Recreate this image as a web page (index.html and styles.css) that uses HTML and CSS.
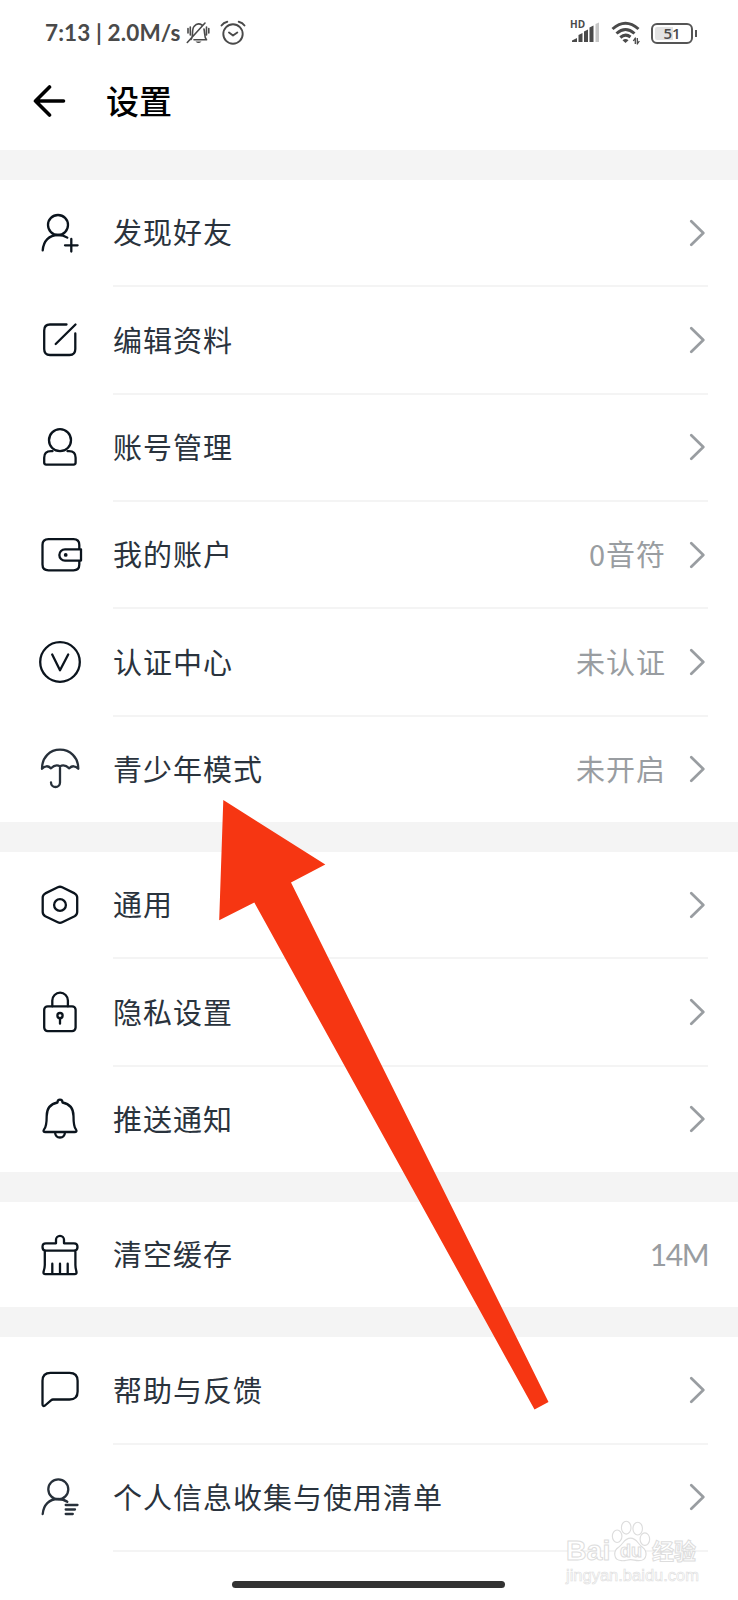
FILE: index.html
```html
<!DOCTYPE html>
<html lang="zh-CN">
<head>
  <meta charset="utf-8" />
  <title>设置</title>
  <link rel="stylesheet" href="styles.css">
</head>
<body>
<svg class="defs" width="0" height="0">
  <symbol id="arrow" viewBox="0 0 16 28"><path d="M2.300 2.300L14.300 14L2.300 25.700" /></symbol>
</svg>
<div class="page">
  <div class="status">
    <span class="time">7:13 | 2.0M/s</span>
    <svg class="mute" width="24" height="24" viewBox="0 0 24 24">
      <path d="M5 18.5C7.500 16 5.500 8 8 5.500Q11.500 1 16 4M18 8C19 12 18 16 20.500 18.800H8M1.300 21.500L19 2M2 7.500V12M4.300 6V14M20.500 6V14M22.800 7.500V12" />
      <path class="fill" d="M9.500 20.500H15.500Q12.500 23.500 9.500 20.500Z" />
    </svg>
    <svg class="alarm" width="26" height="26" viewBox="0 0 26 26">
      <circle cx="13" cy="14" r="9.700" /><path d="M9 12.500L13 15.500L17.300 12.500M1.500 5.500Q3.500 2.500 7.300 1.700M24.500 5.500Q22.500 2.500 18.700 1.700" />
    </svg>
    <div class="signal">
      <span class="hd">HD</span>
      <svg width="30" height="24" viewBox="0 0 30 24">
        <path class="fill" d="M1 21V19.500L6 17V21ZM7.500 21V14L11.500 12V21ZM13 21V10.500L17 8.500V21ZM18.500 21V6.500L22.500 4.500V21Z" />
        <path class="weak" d="M24.500 21V3L28 1.500V21Z" />
      </svg>
    </div>
    <svg class="wifi" width="30" height="24" viewBox="0 0 30 24">
      <path d="M1.500 8Q14.500 -3.500 27.500 8M5.500 12.500Q14.500 4.500 23.500 12.500M9.300 16.500Q14.500 12 19.500 16" />
      <path class="fill" d="M11.500 19.300Q14.500 16.800 17.500 19.300L14.500 22Z" />
      <path class="data" d="M24.300 23V17L22.300 20M26.300 17V23L28.300 20" />
    </svg>
    <div class="battery"><span>51</span></div>
  </div>
  <div class="header">
    <svg width="34" height="32" viewBox="0 0 34 32"><path d="M16.500 2L2.500 16L16.500 30M2.500 16H30.500" /></svg>
    <h1>设置</h1>
  </div>

  <ul class="group">
    <li>
      <svg class="icon" viewBox="0 0 48 48"><circle cx="22" cy="16" r="10" /><path d="M6.700 41.300C7.500 32 13 26 22 26Q27.500 26 31.300 28.600M35.300 30V42.600M29 36.300H41.600" /></svg>
      <div class="row"><span>发现好友</span><svg class="go"><use href="#arrow" /></svg></div>
    </li>
    <li>
      <svg class="icon" viewBox="0 0 48 48"><path d="M30.500 8.500H14Q8.200 8.500 8.200 14.500V33Q8.200 39 14 39H33.500Q39.300 39 39.300 33V17.500M19.700 28L39.500 8.500" /></svg>
      <div class="row"><span>编辑资料</span><svg class="go"><use href="#arrow" /></svg></div>
    </li>
    <li>
      <svg class="icon" viewBox="0 0 48 48"><circle cx="24" cy="17.200" r="11" /><path d="M16.500 28.200H15Q8.200 28.200 8.200 34.800V39.600Q8.200 41.600 10.200 41.600H37.600Q39.600 41.600 39.600 39.600V34.800Q39.600 28.200 33 28.200H31.500" /></svg>
      <div class="row"><span>账号管理</span><svg class="go"><use href="#arrow" /></svg></div>
    </li>
    <li>
      <svg class="icon" viewBox="0 0 48 48"><path d="M43.300 18.300V14Q43.300 8.200 37.500 8.200H12.500Q6.500 8.200 6.500 14V33.500Q6.500 39.300 12.500 39.300H37.500Q43.300 39.300 43.300 33.500V29.600M45 18.300H29A5.600 5.600 0 0 0 29 29.600H45Z" /><circle class="dot" cx="29.700" cy="23.900" r="1.900" /></svg>
      <div class="row"><span>我的账户</span><em>0音符</em><svg class="go"><use href="#arrow" /></svg></div>
    </li>
    <li>
      <svg class="icon" viewBox="0 0 48 48"><circle cx="24" cy="24" r="19.800" /><path d="M16.200 16.500L24 32.200L32.200 16.500" /></svg>
      <div class="row"><span>认证中心</span><em>未认证</em><svg class="go"><use href="#arrow" /></svg></div>
    </li>
    <li>
      <svg class="icon soft" viewBox="0 0 48 48"><path d="M6 23.800C6 12 14 4.700 24 4.700S42.300 12 42.300 23.800Q37.500 19 33.300 23.300Q28.500 18.800 24 21.300Q19.500 18.800 15 23.300Q10.500 19 6 23.800ZM24 21.300V37.500A4.500 4.500 0 0 1 15 37.500" /></svg>
      <div class="row"><span>青少年模式</span><em>未开启</em><svg class="go"><use href="#arrow" /></svg></div>
    </li>
  </ul>

  <ul class="group">
    <li>
      <svg class="icon" viewBox="0 0 48 48"><path d="M21.800 6.300Q24 5.200 26.200 6.300L38.600 12.400Q41.200 13.800 41.200 16.500V31Q41.200 33.700 38.600 35.200L26.200 41.300Q24 42.400 21.800 41.300L9.300 35.200Q6.700 33.700 6.700 31V16.500Q6.700 13.800 9.300 12.400Z" /><circle cx="24" cy="24" r="5.900" /></svg>
      <div class="row"><span>通用</span><svg class="go"><use href="#arrow" /></svg></div>
    </li>
    <li>
      <svg class="icon" viewBox="0 0 48 48"><rect x="8.200" y="18.300" width="31.400" height="24.800" rx="3.500" /><path d="M16.300 18.300V12.500A7.700 7.700 0 0 1 31.900 12.500V18.300M24 30.500V35.700" /><circle cx="24" cy="27.600" r="2.600" /></svg>
      <div class="row"><span>隐私设置</span><svg class="go"><use href="#arrow" /></svg></div>
    </li>
    <li>
      <svg class="icon" viewBox="0 0 48 48"><path d="M21.500 7.500C21.500 3.700 26.500 3.700 26.500 7.500C34 9 37.500 14.500 37.500 21C37.500 29 38 32.500 40 34.500Q41.500 37 38.500 37H9.500Q6.500 37 8 34.500C10 32.500 10.700 29 10.700 21C10.700 14.500 14 9 21.500 7.500ZM19 37.500Q19.500 42.500 24 42.500T29 37.500" /></svg>
      <div class="row"><span>推送通知</span><svg class="go"><use href="#arrow" /></svg></div>
    </li>
  </ul>

  <ul class="group">
    <li>
      <svg class="icon" viewBox="0 0 48 48"><path d="M20 12.300V8.800A4 4 0 0 1 28 8.800V12.300H38Q41.500 12.300 41.500 15.900T38 19.600H10Q6.500 19.600 6.500 15.900T10 12.300H20M8.800 19.600V34Q8.800 37 7.600 40.500Q7 43.200 9.500 43.200H38.500Q41 43.200 40.400 40.500Q39.400 37 39.400 34V19.600M16.300 32.700V43M24 32.700V43M31.700 32.700V43" /></svg>
      <div class="row"><span>清空缓存</span><em class="size">14M</em></div>
    </li>
  </ul>

  <ul class="group">
    <li>
      <svg class="icon" viewBox="0 0 48 48"><path d="M14.500 6.800H33.500Q41.600 6.800 41.600 14.800V25.500Q41.600 33.500 33.500 33.500H17Q16 33.500 15 34.300L9 39.500Q6.500 41 6.500 38V14.800Q6.500 6.800 14.500 6.800Z" /></svg>
      <div class="row"><span>帮助与反馈</span><svg class="go"><use href="#arrow" /></svg></div>
    </li>
    <li>
      <svg class="icon soft" viewBox="0 0 48 48"><circle cx="22.300" cy="16.300" r="10" /><path d="M6.700 41C7.500 32 13 26 22 26Q27.500 26 31.300 28.800M29.700 32H41.500M29.700 36.500H39M29.700 41H36.800" /></svg>
      <div class="row"><span>个人信息收集与使用清单</span><svg class="go"><use href="#arrow" /></svg></div>
    </li>
  </ul>
  <div class="line"></div>
  <div class="home"></div>

  <!-- 红色指示箭头 -->
  <svg class="pointer" width="330" height="612" viewBox="0 0 330 612">
    <path d="M4.300 0L106.300 64.500L72 82.500L329.500 602L315.500 609.500L35.300 102.500L0.200 120.300Z" />
  </svg>

  <!-- 水印 -->
  <div class="mark">
    <div class="logo">
      <span class="bai">Bai</span>
      <div class="paw">
        <svg width="42" height="44" viewBox="0 0 42 46">
          <ellipse cx="6.500" cy="17" rx="5" ry="6.500" /><ellipse cx="16" cy="8" rx="5" ry="6.700" /><ellipse cx="28" cy="9" rx="5" ry="6.700" /><ellipse cx="35.500" cy="20" rx="5" ry="6.500" />
          <path d="M20.500 19C27 19 28 25 33 28.500C38 32 39 42.500 29 42.500C25 42.500 24 41.500 20.500 41.500S15 43 11 42.500C2 42 2.500 32 8 28.500C13 25 14 19 20.500 19Z" />
        </svg>
        <span>du</span>
      </div>
      <span class="jy">经验</span>
    </div>
    <div class="url">jingyan.baidu.com</div>
  </div>
</div>
</body>
</html>
```
FILE: styles.css
```css
*{margin:0;padding:0;box-sizing:border-box;}
body{background:#fff;font-family:"Noto Sans CJK SC","Noto Sans",sans-serif;}
svg{display:block;fill:none;stroke-linecap:round;stroke-linejoin:round;}
ul{list-style:none;}
em{font-style:normal;}
.defs{position:absolute;}
.page{position:relative;width:738px;height:1600px;overflow:hidden;}

/* 状态栏 */
.status{display:flex;align-items:center;height:64px;padding:2px 40px 0 45px;color:#4a4a4a;}
.status svg{stroke:#4a4a4a;stroke-width:1.6;}
.status svg .fill{fill:#4a4a4a;stroke:none;}
.time{width:141px;font:700 22.500px/30px Lato,sans-serif;letter-spacing:.12px;white-space:nowrap;}
.alarm{margin-left:10px;}
.status .alarm{stroke-width:1.9;}
.signal{position:relative;margin-left:auto;}
.hd{position:absolute;left:-1px;top:-2px;font:700 10px/11px "Open Sans",sans-serif;}
.status svg .weak{fill:#c6c6c6;stroke:none;}
.wifi{margin-left:10px;}
.status .wifi{stroke-width:3;stroke-linecap:butt;}
.wifi .data{stroke-width:1.3;}
.battery{position:relative;width:42px;height:21px;margin:0 5px 0 10px;border:2.500px solid #555;border-radius:6px;background:linear-gradient(90deg,#e2e2e2 52%,#fff 52%);background-clip:content-box;padding:2px;}
.battery:after{content:"";position:absolute;right:-6px;top:5px;width:2px;height:7px;background:#555;}
.battery span{display:block;font:600 15px/14px "Open Sans",sans-serif;text-align:center;margin-top:-1px;}

/* 标题 */
.header{display:flex;align-items:center;height:86px;padding:0 0 12px 33px;}
.header svg{stroke:#000;stroke-width:3.600;}
h1{margin:-2px 0 0 39px;font-size:33px;font-weight:500;line-height:48px;color:#000;}

/* 列表 */
.group{border-top:30px solid #f4f4f4;}
.group li{display:flex;align-items:center;height:105.333px;padding:0 30px 0 36px;}
.group li+li{height:107.333px;}
.group li+li .row{border-top:2px solid #f4f4f4;}
.group li+li .icon{margin-top:2px;}
.icon{width:48px;height:48px;flex:none;stroke:#0b141d;stroke-width:2.300;}
.icon .dot{fill:#0b141d;stroke:none;}
.icon.soft{stroke:#27303a;}
.row{display:flex;align-items:center;flex:1;height:100%;margin-left:28.500px;font-size:29px;letter-spacing:1px;color:#2a333d;}
.row span{flex:1;padding-left:.6px;}
.row span,.row em{padding-bottom:2.500px;}
.row em{color:#999da1;margin-right:22.500px;}
.row .size{margin-right:0;padding-bottom:1px;font-family:Lato,sans-serif;font-size:30px;letter-spacing:-1.5px;}
.go{width:16px;height:28px;margin-right:3.500px;stroke:#999da1;stroke-width:2.700;}
.line{height:2px;margin:0 30px 0 112.500px;background:#f4f4f4;}

/* 底部横条 */
.home{width:273px;height:7px;margin:29.500px 0 0 232px;border-radius:4px;background:#333;}

.pointer{position:absolute;left:219px;top:800px;fill:#f63612;}

.mark{position:absolute;left:566px;top:1519px;width:140px;color:#fff;}
.logo{display:flex;align-items:flex-end;height:45px;}
.logo span{-webkit-text-stroke:1px #ddd;}
.bai{width:44px;font:700 28.500px/27px "Liberation Sans",sans-serif;}
.paw{position:relative;}
.paw svg{fill:#fff;stroke:#ddd;stroke-width:1.200;}
.paw span{position:absolute;left:10px;top:21px;font:700 18px/20px "Liberation Sans",sans-serif;}
.jy{font-weight:700;font-size:22px;line-height:30px;}
.url{font:16.500px/22px "Liberation Sans",sans-serif;color:#fff;-webkit-text-stroke:.6px #ddd;}
```
